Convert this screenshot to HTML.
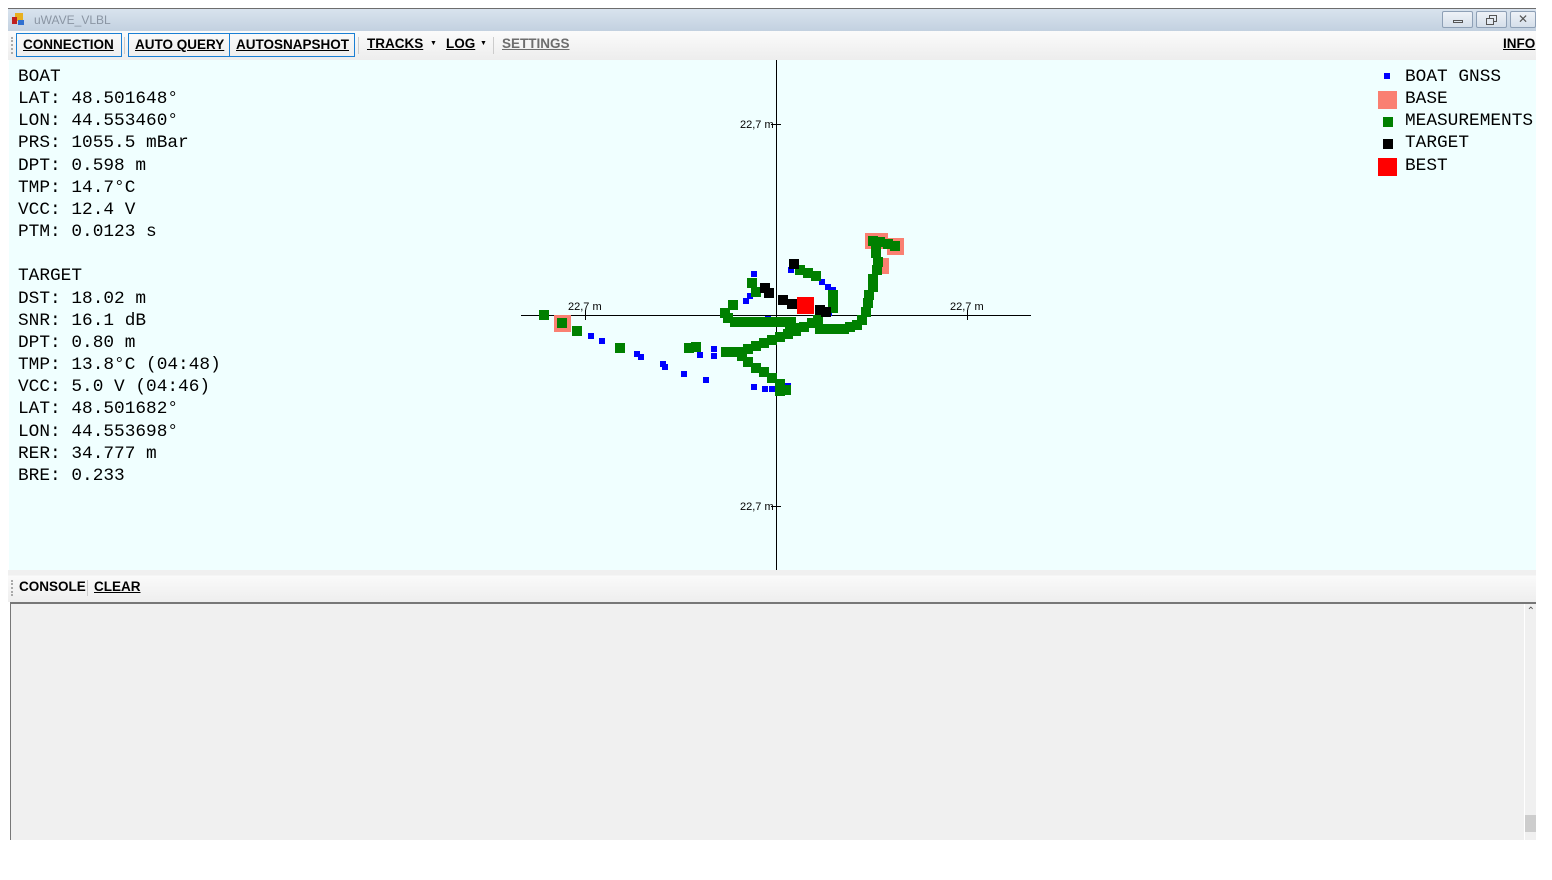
<!DOCTYPE html>
<html><head><meta charset="utf-8"><style>
*{margin:0;padding:0;box-sizing:border-box}
body{width:1552px;height:880px;background:#fff;position:relative;overflow:hidden;font-family:"Liberation Sans",sans-serif}
.abs{position:absolute}
#title{left:8px;top:8px;width:1528px;height:23px;background:linear-gradient(#d9e3ee,#c3d1e0);border-top:1px solid #6d6d6d}
#title span{position:absolute;left:26px;top:4px;font-size:12px;color:#8a95a3}
.wb{position:absolute;top:2px;height:17px;border:1px solid #8ea0b6;border-radius:2px;background:linear-gradient(#eef2f7,#d5dfea)}
#tb{left:8px;top:31px;width:1528px;height:29px;background:linear-gradient(#fbfbfb,#ededed)}
.ti{position:absolute;top:2px;height:24px;font-weight:bold;font-size:13.5px;line-height:22px;text-decoration:underline;color:#000;padding:0 6px;white-space:nowrap}
.bx{border:1px solid #1a7fd4}
.sep{position:absolute;top:6px;width:1px;height:17px;background:#ccc}
#plot{left:9px;top:60px;width:1527px;height:510px;background:#f0ffff}
.mono{font-family:"Liberation Mono",monospace;font-size:17.8px;line-height:22.15px;color:#000;white-space:pre}
#ctb{left:8px;top:570px;width:1528px;height:32px;background:linear-gradient(#f0f0f0 0,#f0f0f0 5px,#fafafa 6px,#eeeeee)}
#cons{left:10px;top:602px;width:1526px;height:238px;background:#f0f0f0;border-top:2px solid #777;border-left:1px solid #777}
</style></head><body>
<div id="title" class="abs">
<svg class="abs" style="left:3px;top:3px" width="14" height="14"><rect x="4" y="1" width="8" height="8" fill="#e8b020"/><rect x="1" y="5" width="5" height="7" fill="#c02020"/><rect x="7" y="8" width="6" height="5" fill="#3070d0"/></svg>
<span>uWAVE_VLBL</span>
<div class="wb" style="left:1434px;width:31px"><div style="position:absolute;left:10px;top:8px;width:10px;height:3px;border:1px solid #555"></div></div>
<div class="wb" style="left:1468px;width:31px"><div style="position:absolute;left:12px;top:3px;width:8px;height:7px;border:1px solid #555"></div><div style="position:absolute;left:9px;top:6px;width:8px;height:7px;border:1px solid #555;background:#e4eaf1"></div></div>
<div class="wb" style="left:1502px;width:26px;color:#555;font-size:12px;text-align:center;line-height:15px">✕</div>
</div>
<div id="tb" class="abs">
<div class="sep" style="left:3px;width:2px;border-left:2px dotted #aaa;background:none"></div>
<div class="ti bx" style="left:8px;width:106px">CONNECTION</div>
<div class="sep" style="left:116px"></div>
<div class="ti bx" style="left:120px;width:102px">AUTO QUERY</div>
<div class="ti bx" style="left:221px;width:126px">AUTOSNAPSHOT</div>
<div class="sep" style="left:350px"></div>
<div class="ti" style="left:353px">TRACKS</div><div class="abs" style="left:422px;top:9px;font-size:7px">▼</div>
<div class="ti" style="left:432px">LOG</div><div class="abs" style="left:472px;top:9px;font-size:7px">▼</div>
<div class="sep" style="left:485px"></div>
<div class="ti" style="left:488px;color:#6d6d6d">SETTINGS</div>
<div class="ti" style="left:1489px">INFO</div>
</div>
<div id="plot" class="abs"></div>
<div class="abs mono" style="left:18px;top:66px">BOAT
LAT: 48.501648°
LON: 44.553460°
PRS: 1055.5 mBar
DPT: 0.598 m
TMP: 14.7°C
VCC: 12.4 V
PTM: 0.0123 s

TARGET
DST: 18.02 m
SNR: 16.1 dB
DPT: 0.80 m
TMP: 13.8°C (04:48)
VCC: 5.0 V (04:46)
LAT: 48.501682°
LON: 44.553698°
RER: 34.777 m
BRE: 0.233</div>
<div class="abs mono" style="left:1405px;top:66px">BOAT GNSS
BASE
MEASUREMENTS
TARGET
BEST</div>
<svg class="abs" style="left:0;top:0" width="1552" height="880">
<rect x="1384" y="73" width="6" height="6" fill="#0000ff"/>
<rect x="1378" y="91" width="19" height="18" fill="#fa8072"/>
<rect x="1383" y="117" width="10" height="10" fill="#008000"/>
<rect x="1383" y="139" width="10" height="10" fill="#000"/>
<rect x="1378" y="158" width="19" height="18" fill="#ff0000"/>
<g stroke="#000" stroke-width="1">
<line x1="776.5" y1="60" x2="776.5" y2="570"/>
<line x1="521" y1="315.5" x2="1031" y2="315.5"/>
<line x1="585.5" y1="310" x2="585.5" y2="320"/>
<line x1="967.5" y1="310" x2="967.5" y2="320"/>
<line x1="771" y1="124.5" x2="781" y2="124.5"/>
<line x1="771" y1="506.5" x2="781" y2="506.5"/>
</g>
<g font-family="Liberation Sans,sans-serif" font-size="11" fill="#000">
<text x="568" y="310">22,7 m</text><text x="950" y="310">22,7 m</text>
<text x="740" y="128">22,7 m</text><text x="740" y="510">22,7 m</text>
</g>
<g fill="#fa8072">
<rect x="554" y="315" width="17" height="17"/><rect x="865" y="233" width="23" height="16"/><rect x="887" y="238" width="17" height="17"/><rect x="873" y="258" width="16" height="16"/>
</g>
<g fill="#0000ff" id="b"></g>
<g fill="#008000" id="g"></g>
<g fill="#000" id="k"></g>
<rect x="797" y="297" width="17" height="17" fill="#ff0000"/>
</svg>
<div id="ctb" class="abs">
<div class="abs" style="left:3px;top:10px;height:16px;border-left:2px dotted #aaa"></div>
<div class="abs" style="left:11px;top:9px;font-size:13.5px;font-weight:bold">CONSOLE</div>
<div class="abs" style="left:79px;top:10px;width:1px;height:16px;background:#ccc"></div>
<div class="abs" style="left:86px;top:9px;font-size:13.5px;font-weight:bold;text-decoration:underline">CLEAR</div>
</div>
<div id="cons" class="abs">
<div class="abs" style="right:0;top:0;width:12px;height:236px;background:#f0f0f0;border-left:1px solid #fff"></div>
<div class="abs" style="right:1px;top:2px;font-size:10px;color:#555">⌃</div>
<div class="abs" style="right:0;top:211px;width:11px;height:17px;background:#cdcdcd"></div>
</div>
<script>
function add(id,pts,s){var g=document.getElementById(id),h='';pts.forEach(function(p){h+='<rect x="'+(p[0]-s/2)+'" y="'+(p[1]-s/2)+'" width="'+s+'" height="'+s+'"/>'});g.innerHTML=h;}
var G=[[544,315],[562,323],[577,331],[620,348],[689,348],[696,347],[726,352],[732,352],[740,352],[748,349],[756,346],[764,343],[772,340],[780,337],[788,334],[796,331],[804,327],[812,323],[818,320],[742,356],[748,362],[756,368],[764,372],[772,378],[780,384],[786,390],[780,391],[752,283],[756,292],[733,305],[725,313],[728,318],[800,270],[808,273],[816,276],[833,295],[833,302],[833,308],[820,329],[828,329],[836,329],[844,329],[850,327],[857,325],[862,320],[866,312],[868,303],[869,295],[873,287],[873,279],[877,270],[878,262],[876,253],[876,246],[873,241],[880,242],[888,244],[895,246],[790,325],[796,328]];
for(var x=735;x<=795;x+=7)G.push([x,322]);
add('g',G,10);
add('b',[[591,336],[602,341],[637,354],[641,357],[663,364],[665,367],[684,374],[706,380],[700,355],[714,349],[714,356],[754,387],[765,389],[772,389],[788,386],[746,301],[750,296],[754,274],[791,270],[822,282],[828,287],[833,290],[829,313],[768,319]],6);
add('k',[[794,264],[765,288],[769,293],[783,300],[792,304],[820,310],[826,312]],10);
</script>
</body></html>
